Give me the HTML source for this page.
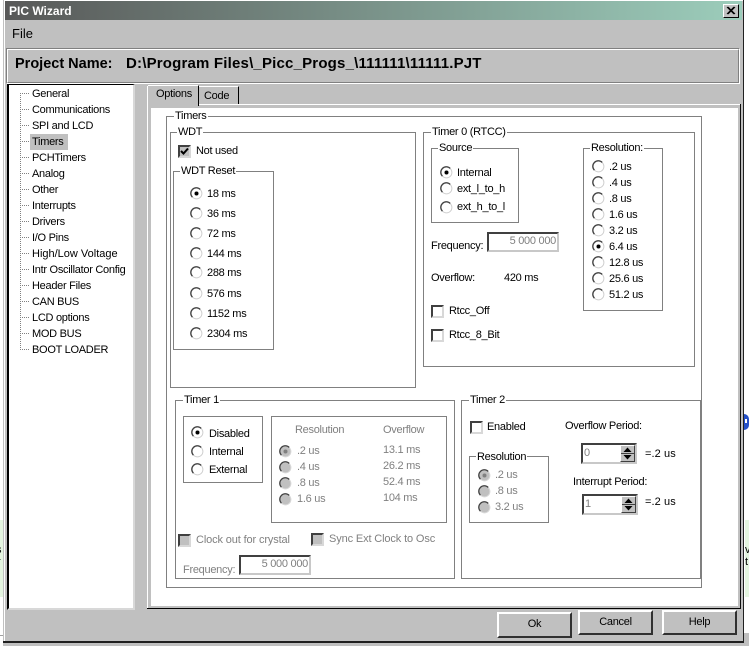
<!DOCTYPE html>
<html><head><meta charset="utf-8"><title>PIC Wizard</title>
<style>
html,body{margin:0;padding:0}
body{width:749px;height:646px;overflow:hidden;background:#fff;position:relative;font:11px/14px "Liberation Sans",sans-serif;letter-spacing:-.28px;color:#000}
div,span,svg{position:absolute;box-sizing:border-box}
.t{white-space:nowrap;height:14px}
.g{color:#808080}
.b{border:1px solid #808080}
.l{background:#fff;padding:0 1px;height:14px;line-height:13px;white-space:nowrap}
.btn{background:#c0c0c0;border:2px solid;border-color:#fff #303030 #303030 #fff;text-align:center;line-height:21px}
.cb{width:13px;height:13px;background:#fff;border:2px solid;border-color:#404040 #d8d8d8 #d8d8d8 #404040}
.cd{background:#c0c0c0}
.in{background:#fff;border:2px solid;border-color:#404040 #c8c8c8 #c8c8c8 #404040}
.r{width:13px;height:13px}
</style></head><body>
<svg width="0" height="0" style="position:absolute"><defs>
<symbol id="o" viewBox="0 0 13 13"><circle cx="6.5" cy="6.5" r="5.4" fill="#fff" stroke="#d0d0d0"/><path d="M10.2 2.4A5.4 5.4 0 0 0 2.4 10.2" fill="none" stroke="#404040" stroke-width="1.3"/></symbol>
<symbol id="x" viewBox="0 0 13 13"><circle cx="6.5" cy="6.5" r="5.4" fill="#fff" stroke="#d0d0d0"/><path d="M10.2 2.4A5.4 5.4 0 0 0 2.4 10.2" fill="none" stroke="#404040" stroke-width="1.3"/><circle cx="6.5" cy="6.5" r="2" fill="#000"/></symbol>
<symbol id="d" viewBox="0 0 13 13"><circle cx="6.5" cy="6.5" r="5.4" fill="#c0c0c0" stroke="#d8d8d8"/><path d="M10.2 2.4A5.4 5.4 0 0 0 2.4 10.2" fill="none" stroke="#404040" stroke-width="1.3"/></symbol>
<symbol id="e" viewBox="0 0 13 13"><circle cx="6.5" cy="6.5" r="5.4" fill="#c0c0c0" stroke="#d8d8d8"/><path d="M10.2 2.4A5.4 5.4 0 0 0 2.4 10.2" fill="none" stroke="#404040" stroke-width="1.3"/><circle cx="6.5" cy="6.5" r="2" fill="#808080"/></symbol>
</defs></svg>

<!-- outside the window -->
<div style="left:0;top:520px;width:3px;height:77px;background:#e4f5e0"></div>
<div class="t" style="left:-4px;top:543px">s</div>
<div class="t" style="left:-3px;top:555px">r</div>
<div style="left:745px;top:520px;width:4px;height:77px;background:#e4f5e0"></div>
<div class="t" style="left:745px;top:543px">v</div>
<div class="t" style="left:745px;top:555px">t</div>
<div style="left:744px;top:414px;width:5px;height:16px;background:#2450c8;border-radius:0 8px 8px 0"></div>
<div style="left:745px;top:419px;width:2px;height:4px;background:#fff"></div>
<div style="left:0;top:635px;width:3px;height:1px;background:#a0a0a0"></div>
<div style="left:744px;top:633px;width:5px;height:13px;background:#c0c0c0"></div>

<!-- window -->
<div style="left:3px;top:0;width:741px;height:643px;background:#fff;border-left:1px solid #c0c0c0"></div>
<div style="left:5px;top:1px;width:738px;height:641px;background:#c0c0c0"></div>
<div style="left:743px;top:0;width:1px;height:643px;background:#202020"></div>
<div style="left:3px;top:641px;width:741px;height:2px;background:#202020"></div>
<div style="left:3px;top:643px;width:746px;height:3px;background:#c0c0c0"></div>

<div style="left:5px;top:1px;width:737px;height:19px;background:linear-gradient(90deg,#585858,#9ccdbb)"></div>
<div class="t" style="left:9px;top:4px;color:#fff;font-weight:bold;font-size:12px;letter-spacing:0">PIC Wizard</div>
<div style="left:723px;top:4px;width:16px;height:14px;background:#c0c0c0;border:1px solid;border-color:#fff #000 #000 #fff"></div>
<svg style="left:723px;top:4px" width="16" height="14"><path d="M4 3L11 10M5 3L12 10M11 3L4 10M12 3L5 10" stroke="#000" stroke-width="1"/></svg>
<div class="t" style="left:12px;top:27px;font-size:13px;letter-spacing:0">File</div>

<div style="left:6px;top:48px;width:734px;height:36px;border:1px solid;border-color:#808080 #fff #fff #808080"></div>
<div style="left:7px;top:49px;width:732px;height:34px;border:1px solid;border-color:#fff #808080 #808080 #fff"></div>
<div class="t" style="left:15px;top:57px;font-weight:bold;font-size:14.5px;letter-spacing:0">Project Name:</div>
<div class="t" style="left:126px;top:57px;font-weight:bold;font-size:15px;letter-spacing:.19px">D:\Program Files\_Picc_Progs_\111111\11111.PJT</div>

<!-- tree -->
<div style="left:7px;top:84px;width:128px;height:526px;background:#fff;border:2px solid;border-color:#000 #d8d8d8 #d8d8d8 #000;border-top-width:1px"></div>
<div style="left:20px;top:93px;width:1px;height:257px;background:repeating-linear-gradient(#808080 0 1px,transparent 1px 2px)"></div>
<div style="left:30px;top:134px;width:38px;height:16px;background:#c0c0c0"></div>
<svg style="left:20px;top:90px" width="12" height="264"><path d="M0 3.500H10M0 19.500H10M0 35.500H10M0 51.500H10M0 67.500H10M0 83.500H10M0 99.500H10M0 115.500H10M0 131.500H10M0 147.500H10M0 163.500H10M0 179.500H10M0 195.500H10M0 211.500H10M0 227.500H10M0 243.500H10M0 259.500H10" stroke="#808080" stroke-dasharray="1 1"/></svg>
<div class="t" style="left:32px;top:87px">General</div>
<div class="t" style="left:32px;top:103px">Communications</div>
<div class="t" style="left:32px;top:119px">SPI and LCD</div>
<div class="t" style="left:32px;top:135px">Timers</div>
<div class="t" style="left:32px;top:151px">PCHTimers</div>
<div class="t" style="left:32px;top:167px">Analog</div>
<div class="t" style="left:32px;top:183px">Other</div>
<div class="t" style="left:32px;top:199px">Interrupts</div>
<div class="t" style="left:32px;top:215px">Drivers</div>
<div class="t" style="left:32px;top:231px">I/O Pins</div>
<div class="t" style="left:32px;top:247px;letter-spacing:0">High/Low Voltage</div>
<div class="t" style="left:32px;top:263px">Intr Oscillator Config</div>
<div class="t" style="left:32px;top:279px">Header Files</div>
<div class="t" style="left:32px;top:295px">CAN BUS</div>
<div class="t" style="left:32px;top:311px">LCD options</div>
<div class="t" style="left:32px;top:327px">MOD BUS</div>
<div class="t" style="left:32px;top:343px">BOOT LOADER</div>

<!-- tab control -->
<div style="left:147px;top:104px;width:594px;height:1px;background:#fff"></div>
<div style="left:147px;top:86px;width:1px;height:522px;background:#fff"></div>
<div style="left:151px;top:108px;width:587px;height:498px;background:#fff"></div>
<div style="left:147px;top:608px;width:594px;height:1px;background:#000"></div>
<div style="left:740px;top:104px;width:1px;height:505px;background:#101010"></div>
<div style="left:148px;top:85px;width:51px;height:21px;background:#c0c0c0;border-top:1px solid #fff;border-right:1px solid #000"></div>
<div class="t" style="left:156px;top:87px">Options</div>
<div style="left:199px;top:86px;width:40px;height:18px;background:#c0c0c0;border-top:1px solid #fff;border-right:1px solid #000"></div>
<div class="t" style="left:204px;top:89px">Code</div>

<!-- Timers group -->
<div class="b" style="left:166px;top:116px;width:536px;height:472px"></div>
<div class="l" style="left:174px;top:110px">Timers</div>

<div class="b" style="left:170px;top:132px;width:246px;height:256px"></div>
<div class="l" style="left:177px;top:126px">WDT</div>
<div class="cb" style="left:178px;top:145px;background:#c0c0c0"></div>
<svg style="left:178px;top:145px" width="13" height="13"><path d="M3 6L5.500 8.500L10 3.500" fill="none" stroke="#000" stroke-width="2"/></svg>
<div class="t" style="left:196px;top:144px">Not used</div>

<div class="b" style="left:173px;top:171px;width:101px;height:179px"></div>
<div class="l" style="left:180px;top:165px">WDT Reset</div>
<svg class="r" style="left:190px;top:187px"><use href="#x"/></svg><div class="t" style="left:207px;top:187px">18 ms</div>
<svg class="r" style="left:190px;top:207px"><use href="#o"/></svg><div class="t" style="left:207px;top:207px">36 ms</div>
<svg class="r" style="left:190px;top:227px"><use href="#o"/></svg><div class="t" style="left:207px;top:227px">72 ms</div>
<svg class="r" style="left:190px;top:247px"><use href="#o"/></svg><div class="t" style="left:207px;top:247px">144 ms</div>
<svg class="r" style="left:190px;top:266px"><use href="#o"/></svg><div class="t" style="left:207px;top:266px">288 ms</div>
<svg class="r" style="left:190px;top:287px"><use href="#o"/></svg><div class="t" style="left:207px;top:287px">576 ms</div>
<svg class="r" style="left:190px;top:307px"><use href="#o"/></svg><div class="t" style="left:207px;top:307px">1152 ms</div>
<svg class="r" style="left:190px;top:327px"><use href="#o"/></svg><div class="t" style="left:207px;top:327px">2304 ms</div>

<!-- Timer 0 -->
<div class="b" style="left:423px;top:132px;width:272px;height:235px"></div>
<div class="l" style="left:431px;top:126px">Timer 0 (RTCC)</div>
<div class="b" style="left:431px;top:148px;width:88px;height:75px"></div>
<div class="l" style="left:438px;top:142px">Source</div>
<svg class="r" style="left:440px;top:166px"><use href="#x"/></svg><div class="t" style="left:457px;top:166px">Internal</div>
<svg class="r" style="left:440px;top:182px"><use href="#o"/></svg><div class="t" style="left:457px;top:182px">ext_l_to_h</div>
<svg class="r" style="left:440px;top:201px"><use href="#o"/></svg><div class="t" style="left:457px;top:200px">ext_h_to_l</div>
<div class="t" style="left:431px;top:239px">Frequency:</div>
<div class="in g" style="left:487px;top:232px;width:72px;height:20px;text-align:right;padding-right:1px;line-height:14px">5 000 000</div>
<div class="t" style="left:431px;top:271px">Overflow:</div>
<div class="t" style="left:504px;top:271px">420 ms</div>
<div class="cb" style="left:431px;top:305px"></div><div class="t" style="left:449px;top:304px">Rtcc_Off</div>
<div class="cb" style="left:431px;top:329px"></div><div class="t" style="left:449px;top:328px">Rtcc_8_Bit</div>

<div class="b" style="left:583px;top:148px;width:80px;height:163px"></div>
<div class="l" style="left:590px;top:142px">Resolution:</div>
<svg class="r" style="left:592px;top:160px"><use href="#o"/></svg><div class="t" style="left:609px;top:160px">.2 us</div>
<svg class="r" style="left:592px;top:176px"><use href="#o"/></svg><div class="t" style="left:609px;top:176px">.4 us</div>
<svg class="r" style="left:592px;top:192px"><use href="#o"/></svg><div class="t" style="left:609px;top:192px">.8 us</div>
<svg class="r" style="left:592px;top:208px"><use href="#o"/></svg><div class="t" style="left:609px;top:208px">1.6 us</div>
<svg class="r" style="left:592px;top:224px"><use href="#o"/></svg><div class="t" style="left:609px;top:224px">3.2 us</div>
<svg class="r" style="left:592px;top:240px"><use href="#x"/></svg><div class="t" style="left:609px;top:240px">6.4 us</div>
<svg class="r" style="left:592px;top:256px"><use href="#o"/></svg><div class="t" style="left:609px;top:256px">12.8 us</div>
<svg class="r" style="left:592px;top:272px"><use href="#o"/></svg><div class="t" style="left:609px;top:272px">25.6 us</div>
<svg class="r" style="left:592px;top:288px"><use href="#o"/></svg><div class="t" style="left:609px;top:288px">51.2 us</div>

<!-- Timer 1 -->
<div class="b" style="left:175px;top:400px;width:280px;height:179px"></div>
<div class="l" style="left:183px;top:394px">Timer 1</div>
<div class="b" style="left:183px;top:416px;width:80px;height:67px"></div>
<svg class="r" style="left:191px;top:426px"><use href="#x"/></svg><div class="t" style="left:209px;top:427px">Disabled</div>
<svg class="r" style="left:191px;top:445px"><use href="#o"/></svg><div class="t" style="left:209px;top:445px">Internal</div>
<svg class="r" style="left:191px;top:463px"><use href="#o"/></svg><div class="t" style="left:209px;top:463px">External</div>

<div class="b" style="left:271px;top:416px;width:176px;height:107px"></div>
<div class="t g" style="left:295px;top:423px">Resolution</div>
<div class="t g" style="left:383px;top:423px">Overflow</div>
<svg class="r" style="left:279px;top:445px"><use href="#e"/></svg><div class="t g" style="left:297px;top:444px">.2 us</div>
<svg class="r" style="left:279px;top:461px"><use href="#d"/></svg><div class="t g" style="left:297px;top:460px">.4 us</div>
<svg class="r" style="left:279px;top:477px"><use href="#d"/></svg><div class="t g" style="left:297px;top:476px">.8 us</div>
<svg class="r" style="left:279px;top:493px"><use href="#d"/></svg><div class="t g" style="left:297px;top:492px">1.6 us</div>
<div class="t g" style="left:383px;top:443px">13.1 ms</div>
<div class="t g" style="left:383px;top:459px">26.2 ms</div>
<div class="t g" style="left:383px;top:475px">52.4 ms</div>
<div class="t g" style="left:383px;top:491px">104 ms</div>

<div class="cb cd" style="left:178px;top:534px"></div><div class="t g" style="left:196px;top:533px;letter-spacing:-.13px">Clock out for crystal</div>
<div class="cb cd" style="left:311px;top:533px"></div><div class="t g" style="left:329px;top:532px;letter-spacing:-.13px">Sync Ext Clock to Osc</div>
<div class="t g" style="left:183px;top:563px">Frequency:</div>
<div class="in g" style="left:239px;top:555px;width:72px;height:20px;text-align:right;padding-right:1px;line-height:14px">5 000 000</div>

<!-- Timer 2 -->
<div class="b" style="left:461px;top:400px;width:240px;height:179px"></div>
<div class="l" style="left:469px;top:394px">Timer 2</div>
<div class="cb" style="left:470px;top:421px"></div><div class="t" style="left:487px;top:420px">Enabled</div>
<div class="t" style="left:565px;top:419px">Overflow Period:</div>
<div class="b" style="left:469px;top:456px;width:80px;height:67px"></div>
<div class="l" style="left:476px;top:451px">Resolution</div>
<svg class="r" style="left:478px;top:469px"><use href="#e"/></svg><div class="t g" style="left:495px;top:468px">.2 us</div>
<svg class="r" style="left:478px;top:485px"><use href="#d"/></svg><div class="t g" style="left:495px;top:484px">.8 us</div>
<svg class="r" style="left:478px;top:501px"><use href="#d"/></svg><div class="t g" style="left:495px;top:500px">3.2 us</div>

<div class="in g" style="left:581px;top:443px;width:56px;height:21px;line-height:16px;padding-left:1px">0</div>
<div style="left:620px;top:445px;width:15px;height:17px;background:#c0c0c0;border:1px solid;border-color:#fff #404040 #404040 #fff"></div>
<svg style="left:620px;top:445px" width="15" height="17"><path d="M7.500 2.500L11.500 7H3.500ZM3.500 10H11.500L7.500 14.500Z" fill="#000"/><path d="M1 8.500H14" stroke="#404040"/></svg>
<div class="t" style="left:645px;top:447px;letter-spacing:.1px">=.2 us</div>
<div class="t" style="left:573px;top:475px">Interrupt Period:</div>
<div class="in g" style="left:582px;top:494px;width:56px;height:21px;line-height:16px;padding-left:1px">1</div>
<div style="left:621px;top:496px;width:15px;height:17px;background:#c0c0c0;border:1px solid;border-color:#fff #404040 #404040 #fff"></div>
<svg style="left:621px;top:496px" width="15" height="17"><path d="M7.500 2.500L11.500 7H3.500ZM3.500 10H11.500L7.500 14.500Z" fill="#000"/><path d="M1 8.500H14" stroke="#404040"/></svg>
<div class="t" style="left:645px;top:495px;letter-spacing:.1px">=.2 us</div>

<!-- buttons -->
<div class="btn" style="left:497px;top:612px;width:75px;height:26px">Ok</div>
<div class="btn" style="left:578px;top:610px;width:75px;height:25px">Cancel</div>
<div class="btn" style="left:662px;top:610px;width:75px;height:25px">Help</div>
</body></html>
